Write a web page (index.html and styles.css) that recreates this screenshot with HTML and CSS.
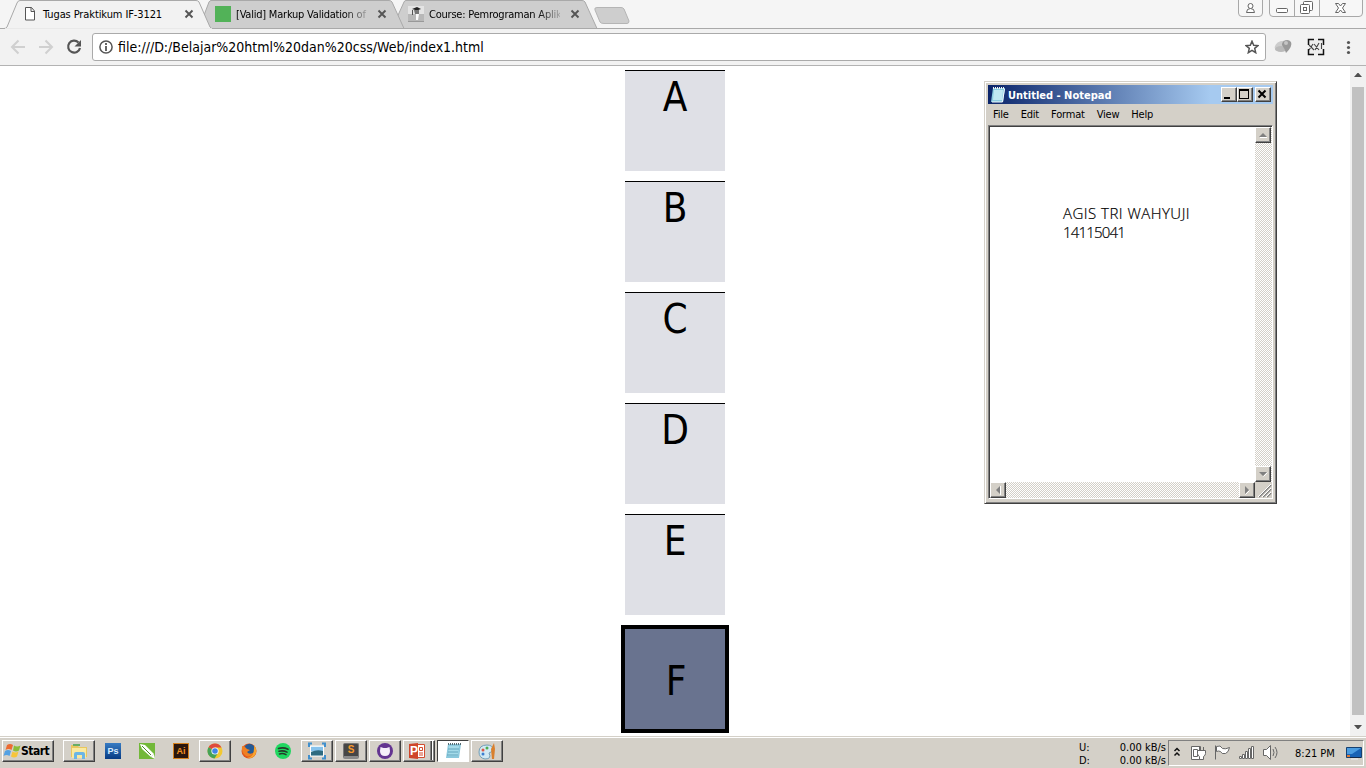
FILE: index.html
```html
<!DOCTYPE html>
<html lang="en">
<head>
<meta charset="utf-8">
<title>Tugas Praktikum IF-3121</title>
<link rel="stylesheet" href="styles.css">
</head>
<body>
<div class="desktop">
  <header class="browser">
    <div class="tabstrip">
      <svg class="tabshapes" width="640" height="29" viewBox="0 0 640 29">
        <path d="M392 28.500 L404 2 Q404.500 .5 406 .5 H582 Q584 .5 585 2 L597 28.500Z" fill="#cecece" stroke="#a9a9a9"/>
        <path d="M199 28.500 L209 2 Q210 .5 211 .5 H389 Q391 .5 392 2 L404 28.500Z" fill="#cecece" stroke="#a9a9a9"/>
        <path d="M597 7.500H621Q623 7.500 624 9L629 21Q629 23.500 627 23.500H604Q601 23.500 600 22L595 10Q594 7.500 597 7.500Z" fill="#cecece" stroke="#b5b5b5"/>
        <path d="M0 28.500H640" stroke="#a9a9a9"/>
        <path d="M0 29V28.500H4Q6 28.500 7 27L17 3Q18 .5 20 .5H196Q198 .5 199 2L210 27Q211 28.500 213 29Z" fill="#f2f2f2" stroke="#a9a9a9"/>
        <path d="M5 29H212" stroke="#f2f2f2" stroke-width="1.500"/>
      </svg>
      <div class="tab tab-one">
        <svg width="16" height="16" viewBox="0 0 16 16"><path d="M3.500 1.500h6l3 3.500v9h-9zM9 1.500V5.500h3.500" fill="#fff" stroke="#555"/></svg>
        <span class="tabtitle title-one">Tugas Praktikum IF-3121</span>
        <svg class="close" width="10" height="10" viewBox="0 0 10 10"><path d="M1.500 1.500l7 7M8.500 1.500l-7 7" stroke="#555" stroke-width="1.900"/></svg>
      </div>
      <div class="tab tab-two">
        <i class="green"></i>
        <span class="tabtitle fade title-two">[Valid] Markup Validation of</span>
        <svg class="close" width="10" height="10" viewBox="0 0 10 10"><path d="M1.500 1.500l7 7M8.500 1.500l-7 7" stroke="#555" stroke-width="1.900"/></svg>
      </div>
      <div class="tab tab-three">
        <svg width="16" height="16" viewBox="0 0 16 16"><path d="M0 0h16v16H0z" fill="#b8b8b8"/><path d="M0 0h16v8H0z" fill="#e4e4e4"/><path d="M4 3l5-2 4 2-4 1.500z" fill="#222"/><path d="M6 4h5v4H7z" fill="#777"/><path d="M8 8h3l-1 6H8z" fill="#fafafa"/><path d="M4.500 4v5" stroke="#555"/><path d="M0 15.500h16" stroke="#999"/></svg>
        <span class="tabtitle fade title-three">Course: Pemrograman Aplik</span>
        <svg class="close" width="10" height="10" viewBox="0 0 10 10"><path d="M1.500 1.500l7 7M8.500 1.500l-7 7" stroke="#555" stroke-width="1.900"/></svg>
      </div>
      <svg class="wincontrols" width="132" height="18" viewBox="0 0 132 18">
        <g fill="#f7f7f7" stroke="#a8a8a8"><path d="M4.500-1V13q0 3.500 3.500 3.500H25q3.500 0 3.500-3.500V-1"/><path d="M35.500-1V13q0 3.500 3.500 3.500h86q3.500 0 3.500-3.500V-1M60.500 0v16M85.500 0v16"/></g>
        <g fill="#fff" stroke="#666"><circle cx="16.500" cy="6" r="2.500"/><path d="M12.500 12.500q0-4 4-4t4 4z"/><rect x="42.500" y="8.500" width="11" height="4" rx="1"/><rect x="69.500" y="1.500" width="9" height="9" rx="1"/><rect x="66.500" y="4.500" width="9" height="9" rx="1"/><rect x="69.500" y="7.500" width="3" height="3"/><path d="M101.500 3.500h3l2 2.500 2-2.500h3l-3 4.500 3 4.500h-3l-2-2.500-2 2.500h-3l3-4.500z"/></g>
      </svg>
    </div>
    <div class="toolbar">
      <svg class="nav" width="92" height="36" viewBox="0 0 92 36"><g fill="none" stroke="#d0d0d0" stroke-width="2"><path d="M25 18H12M18.500 11.500L12 18l6.500 6.500M39 18h13M45.500 11.500L52 18l-6.500 6.500"/></g><path d="M78.500 13.500A6 6 0 1 0 80 19" fill="none" stroke="#555" stroke-width="2.200"/><path d="M81 11v6.500h-6.500z" fill="#555"/></svg>
      <div class="address">
        <svg width="14" height="14" viewBox="0 0 14 14"><circle cx="7" cy="7" r="6.100" fill="none" stroke="#555" stroke-width="1.500"/><path d="M7 6v5M7 3v2" stroke="#555" stroke-width="1.800"/></svg>
        <span class="url">file:///D:/Belajar%20html%20dan%20css/Web/index1.html</span>
        <svg class="star" width="14" height="14" viewBox="0 0 14 14"><path d="M7 1.200l1.700 4 4.300.4-3.300 2.800 1 4.300L7 10.400l-3.700 2.300 1-4.300L1 5.600l4.300-.4z" fill="none" stroke="#555" stroke-width="1.500"/></svg>
      </div>
      <svg class="extensions" width="100" height="36" viewBox="0 0 100 36">
        <ellipse cx="16" cy="17" rx="7.500" ry="5" fill="#ccc" transform="rotate(-20 16 17)"/><ellipse cx="15" cy="20" rx="6" ry="3" fill="#bababa"/><path d="M16 16a5 5 0 0 1 9-3q2 4-5 11-1-4-4-8z" fill="#999"/><circle cx="20" cy="14" r="2" fill="#c5c5c5"/>
        <path d="M42 10h16v16H42z" fill="#eee"/><path d="M48 10.500h-5.500V16M52 10.500h5.500V16M42.500 20v5.500H48M57.500 20v5.500H52" fill="none" stroke="#111" stroke-width="1.500"/><path d="M43 16l5 5M47 15l-4 6M48 15l5 6M53 14l-4 7M55.500 14v6" stroke="#444" stroke-width="1.100"/>
        <g fill="#555"><circle cx="82.500" cy="13.500" r="1.600"/><circle cx="82.500" cy="18.500" r="1.600"/><circle cx="82.500" cy="23.500" r="1.600"/></g>
      </svg>
    </div>
  </header>
  <main class="viewport">
    <div class="page">
      <div class="box">A</div>
      <div class="box">B</div>
      <div class="box">C</div>
      <div class="box">D</div>
      <div class="box">E</div>
      <div class="box active">F</div>
    </div>
    <div class="pagescroll">
      <svg width="16" height="21" viewBox="0 0 16 21"><path d="M4 11l3.500-4h1L12 11z" fill="#505050"/></svg>
      <i class="thumb"></i>
      <svg width="16" height="21" viewBox="0 0 16 21"><path d="M4 10l3.500 4h1L12 10z" fill="#505050"/></svg>
    </div>
  </main>
  <footer class="taskbar">
    <div class="start"><svg width="18" height="18" viewBox="0 0 18 18"><path d="M4 3q3-2 6 0L8.500 8Q5.500 6 2.500 8z" fill="#ed6b32"/><path d="M11 3.500q3 2 6.500 0L16 8.500q-3 2-6 0z" fill="#8abd38"/><path d="M2 9q3-2 6 0l-1.500 5q-3-2-6 0z" fill="#54a1e2"/><path d="M9.500 9.500q3 2 6 0L14 14.500q-3 2-6 0z" fill="#f7c53a"/></svg><span>Start</span></div>
    <div class="apps">
      <div class="app raised"><svg viewBox="0 0 20 20"><path d="M2 4h6l2 2h8v10H2z" fill="#e9c75e"/><path d="M3 7h14v10H3z" fill="#fae9a0"/><path d="M4 3h7v2H4z" fill="#68ad65"/><path d="M5 18v-5q0-2 2-2h7q2 0 2 2v5h-3v-4H8v4z" fill="#6bb5e6"/></svg></div>
      <div class="app ps"><span>Ps</span></div>
      <div class="app"><svg viewBox="0 0 20 20"><path d="M2 2h16v16H2z" fill="#72b839"/><path d="M3 3l5 1 9 9-3 3-9-8z" fill="#fff"/><path d="M14 16l4 2-1-5z" fill="#fff"/><path d="M5 5l9 9" stroke="#4d8d25"/></svg></div>
      <div class="app ai"><span>Ai</span></div>
      <div class="app raised"><svg viewBox="0 0 20 20"><circle cx="10" cy="10" r="7.500" fill="#f2c831"/><path d="M10 10L3.500 6.200A7.500 7.500 0 0 1 16.500 6.500H10z" fill="#de4b3e"/><path d="M10 10L3.500 6.200A7.500 7.500 0 0 0 9.500 17.500L13 12z" fill="#45a257"/><circle cx="10" cy="10" r="3.600" fill="#fff"/><circle cx="10" cy="10" r="2.800" fill="#4285e5"/></svg></div>
      <div class="app"><svg viewBox="0 0 20 20"><circle cx="10" cy="10" r="7.500" fill="#e0561b"/><circle cx="10.500" cy="8" r="5.300" fill="#265a94"/><path d="M3 5q3 0 5 3l3 1-3 2q2 3 6 1-2 5-7 3-5-3-4-10z" fill="#ef7f22"/><path d="M15 4q4 5 1 10-3 4-8 3 8-1 7-13z" fill="#f6a52f"/></svg></div>
      <div class="app"><svg viewBox="0 0 20 20"><circle cx="10" cy="10" r="8" fill="#20d760"/><g fill="none" stroke="#253b2b" stroke-width="1.600" stroke-linecap="round"><path d="M5.500 7.500q5-1.500 9.500.8M6 10.300q4-1.200 8 .8M6.500 12.900q3.500-1 6.500.7"/></g></svg></div>
      <div class="app raised"><svg viewBox="0 0 20 20"><path d="M3.500 5h13v10h-13z" fill="#cde9f6" stroke="#fff"/><path d="M4 6h12v4H4z" fill="#86c2ec"/><path d="M4 11q6-3 12-1v4.500H4z" fill="#2f6b80"/><path d="M2 6V2.500h3M15 2.500h3V6M2 14v3.500h3M15 17.500h3V14" fill="none" stroke="#4190cd" stroke-width="2"/></svg></div>
      <div class="app raised sublime"><span>S</span></div>
      <div class="app raised"><svg viewBox="0 0 20 20"><circle cx="10" cy="10" r="8" fill="#633491"/><path d="M5.500 6l3 1h3l3-1 .5 4q0 5-5 5t-5-5z" fill="#f5effa"/></svg></div>
      <div class="app raised ppt"><svg viewBox="0 0 20 20"><path d="M9 3.500h8.500v13H9z" fill="#fff" stroke="#d44c2f"/><path d="M12.500 6.500h3v3h-3zM12 12h4M12 14h4" fill="#fff" stroke="#d44c2f"/><path d="M2 3l9-1v16l-9-1z" fill="#cf4529"/></svg><span>P</span></div>
      <div class="app pressed"><svg viewBox="0 0 20 20"><path d="M5 3h13l-2 14H3z" fill="#8ac8dc"/><path d="M6 5h10l-1 10H5z" fill="#a5dbe9"/><path d="M5 3h13" stroke="#566b73" stroke-width="2" stroke-dasharray="1 1"/><path d="M5 8h11M5 11h10M4 14h11" stroke="#63a5bd"/></svg></div>
      <div class="app raised"><svg viewBox="0 0 20 20"><path d="M2 11q0-7 8-7 6 0 6 5-1 2-4 3 3 6-4 6-6-1-6-7z" fill="#d1e9f3" stroke="#729fb8"/><circle cx="6" cy="9" r="1.500" fill="#dc5845"/><circle cx="10" cy="7" r="1.500" fill="#4fad50"/><circle cx="6" cy="13" r="1.500" fill="#3b7fd0"/><path d="M15 18L14 8l3-6 1 6-1 10z" fill="#d9802e"/></svg></div>
    </div>
    <div class="rates"><div><span>U:</span><span>0.00 kB/s</span></div><div><span>D:</span><span>0.00 kB/s</span></div></div>
    <div class="tray">
      <svg width="122" height="22" viewBox="0 0 122 22">
        <path d="M5.500 9L8 6.500 10.500 9M5.500 13.500L8 11l2.500 2.500" fill="none" stroke="#111" stroke-width="1.500"/>
        <g fill="#fff" stroke="#666"><path d="M22.500 4.500h9v13h-9z"/><path d="M24.500 7.500h4v7h-4z"/><path d="M28.500 8.500h8v3q0 2-2 3v3h-4v-3q-2-1-2-3zM30.500 8V5M34.500 8V5"/><path d="M46.500 3.500v14M47.500 4.500q4-2 6 2 3 1 7-1-1 5-4 6-4 1-5-2-2-1-4 0z"/><path d="M70.500 14.500h2v2h-2zM73.500 12.500h2v4h-2zM76.500 9.500h2v7h-2zM79.500 6.500h2v10h-2zM82.500 4.500h2v12h-2z"/><path d="M94.500 7.500h3l4-4v14l-4-4h-3z"/><path d="M104 7q2 3.500 0 7M106 5q4 5.500 0 11" fill="none"/></g>
      </svg>
      <span class="clock">8:21 PM</span>
      <svg width="16" height="16" viewBox="0 0 16 16"><path d="M.5 2.500h15v10H.5z" fill="#1762b5" stroke="#174171"/><path d="M1 3h14L6 9H1z" fill="#4b9ce0"/><path d="M1 10h3v2H1z" fill="#db7937"/><path d="M4 12h11v1H4z" fill="#152a49"/><path d="M5 14h7" stroke="#eee"/></svg>
    </div>
  </footer>

  <section class="notepad">
    <div class="titlebar">
      <svg width="16" height="17" viewBox="0 0 16 17"><path d="M3 2h12l-2 14H1z" fill="#8ccce0"/><path d="M4 4h9l-1 10H3z" fill="#c0e8f2"/><path d="M3 2h12" stroke="#f5f5f5" stroke-width="2" stroke-dasharray="1 1"/><path d="M14.500 3l-2 13H2" fill="none" stroke="#f4fbff"/></svg>
      <span class="caption">Untitled - Notepad</span>
      <span class="winbtn"><svg viewBox="0 0 12 12"><path d="M2 9h6v2H2z"/></svg></span><span class="winbtn"><svg viewBox="0 0 12 12"><path d="M1 1h10v10H1zM2 3v7h8V3z" fill-rule="evenodd"/></svg></span><span class="winbtn closebtn"><svg viewBox="0 0 12 12"><path d="M2.500 2.500l7 7M9.500 2.500l-7 7" stroke="#000" stroke-width="2"/></svg></span>
    </div>
    <nav class="menu"><span>File</span><span>Edit</span><span>Format</span><span>View</span><span>Help</span></nav>
    <div class="editor">
      <div class="note"><span class="name">AGIS TRI WAHYUJI</span><br><span class="number">14115041</span></div>
      <div class="vscroll"><span class="sbtn"><svg viewBox="0 0 12 12"><path d="M3 8.500h7" stroke="#fff"/><path d="M2 8l4-4 4 4z" fill="#808080"/></svg></span><span class="sbtn"><svg viewBox="0 0 12 12"><path d="M10.500 4.500L6.500 8.500" stroke="#fff"/><path d="M2 4l4 4 4-4z" fill="#808080"/></svg></span></div>
      <div class="hscroll"><span class="sbtn"><svg viewBox="0 0 12 12"><path d="M8.500 2v9" stroke="#fff"/><path d="M8 2L4 6l4 4z" fill="#808080"/></svg></span><span class="sbtn"><svg viewBox="0 0 12 12"><path d="M4.500 10.500l4-4" stroke="#fff"/><path d="M4 2l4 4-4 4z" fill="#808080"/></svg></span></div>
      <svg class="grip" width="17" height="16" viewBox="0 0 17 16"><path d="M4 15L16 3M8 15l8-8M12 15l4-4" stroke="#808080" stroke-width="1.600"/><path d="M3 15L16 2M7 15l9-9M11 15l5-5" stroke="#fff"/></svg>
    </div>
  </section>
</div>
</body>
</html>
```
FILE: styles.css
```css
*{box-sizing:border-box}
body{margin:0;background:#fff;color:#000;font:11px "DejaVu Sans Condensed","DejaVu Sans",sans-serif;font-stretch:condensed}
svg{display:block;flex:none}
.desktop{position:relative;width:1366px;height:768px;overflow:hidden;display:flex;flex-direction:column}
.browser{height:66px;background:#f2f2f2;border-bottom:1px solid #b3b3b3}
.tabstrip{height:29px;position:relative;display:flex;align-items:center;background:#f5f5f5;border-bottom:1px solid #a9a9a9}
.tabshapes{position:absolute;left:0;top:0}
.tab{position:relative;display:flex;align-items:center;height:28px;flex:none}
.tab-one{width:193px;margin-left:22px}
.tab-two{width:193px}
.tab-three{width:200px}
.tabtitle{width:131px;margin-left:5px;white-space:nowrap;line-height:16px;padding-top:1px}
.title-one{letter-spacing:-.1px}
.title-two{letter-spacing:-.22px}
.title-three{letter-spacing:-.22px}
.close{margin-left:10px}
.green{width:16px;height:16px;background:#52b258}
.fade{-webkit-mask-image:linear-gradient(90deg,#000 108px,#0003 131px);mask-image:linear-gradient(90deg,#000 108px,#0003 131px)}
.wincontrols{margin-left:auto;align-self:flex-start}
.toolbar{display:flex;height:36px;align-items:center}
.address{width:1174px;height:28px;border:1px solid #aaa;border-radius:3px;background:#fff;display:flex;align-items:center;padding:0 6px}
.url{font-size:14px;margin-left:5px;white-space:nowrap}
.star{margin-left:auto}
.viewport{height:670px;display:flex;position:relative}
.page{width:1350px;display:flex;flex-direction:column;align-items:center;gap:10px;padding-top:4px}
.box{width:100px;height:101px;flex:none;background:#dfe0e6;border-top:1px solid #000;text-align:center;font-size:40px;line-height:53px}
.box.active{width:108px;height:108px;background:#69738f;border:4px solid #000;line-height:105px;padding-left:2px}
.pagescroll{width:16px;background:#f1f1f1;display:flex;flex-direction:column;justify-content:space-between}
.thumb{height:628px;width:12px;margin-left:2px;background:#c1c1c1}
.taskbar{height:32px;background:#d4d0c8;box-shadow:inset 0 1px #d4d0c8,inset 0 2px #fff;display:flex;align-items:flex-start;padding:4px 2px 2px}
.start{width:52px;height:22px;border:1px solid;border-color:#fff #404040 #404040 #fff;box-shadow:inset -1px -1px #808080;display:flex;align-items:center;font-weight:bold;font-size:12px;letter-spacing:-.5px}
.apps{display:flex;gap:2px;margin-left:9px}
.app{width:32px;height:22px;display:flex;align-items:center;justify-content:center;position:relative}
.app svg{width:20px;height:20px}
.raised{border:1px solid;border-color:#fff #404040 #404040 #fff;box-shadow:inset -1px -1px #808080}
.pressed{border:1px solid;border-color:#404040 #fff #fff #404040;background:#fff}
.ps span,.ai span,.sublime span{width:16px;height:16px;display:block;font:bold 9px/16px "Liberation Sans",sans-serif;text-align:center}
.ps span{background:linear-gradient(#377bc3,#073b83);color:#d6ebff}
.ai span{background:#2b160c;color:#f39320;border:1px solid #d5811d;line-height:14px}
.sublime span{background:#464646;color:#f7992c;border:1px solid #777;border-bottom:3px solid #8a8a8a;border-radius:2px;line-height:12px;font-size:10px}
.ppt{border-right:1px solid #404040;box-shadow:inset -1px -1px #808080,inset -2px 0 #fff,inset -3px 0 #404040,inset -4px 0 #808080}
.ppt svg{margin-right:4px}
.ppt span{position:absolute;left:6px;top:3px;font:bold 12px/14px "Liberation Sans",sans-serif;color:#fff}
.rates{margin-left:auto;width:88px;font-size:11px;line-height:13px;padding:1px 1px 0 0;letter-spacing:0}
.rates div{display:flex;justify-content:space-between}
.tray{margin-left:1px;height:26px;width:196px;border:1px solid;border-color:#808080 #fff #fff #808080;display:flex;align-items:center;padding-right:1px}
.clock{white-space:nowrap;margin:0 auto 0 4px}
.notepad{position:absolute;left:984px;top:81px;width:293px;height:423px;background:#d4d0c8;border:1px solid;border-color:#d4d0c8 #404040 #404040 #d4d0c8;box-shadow:inset 1px 1px #fff,inset -1px -1px #808080;padding:3px}
.titlebar{height:19px;background:linear-gradient(90deg,#0a246a,#a6caf0 78%);display:flex;align-items:center;padding:0 2px;color:#fff}
.caption{font-weight:bold;margin:0 auto 0 2px;padding-top:1px;letter-spacing:0;white-space:nowrap}
.winbtn{width:16px;height:15px;background:#d4d0c8;border:1px solid;border-color:#fff #404040 #404040 #fff;box-shadow:inset -1px -1px #808080}
.winbtn svg{width:12px;height:12px}
.closebtn{margin-left:2px}
.menu{height:21px;display:flex;padding-left:5px;gap:12px;line-height:21px}
.menu span{letter-spacing:-.2px}
.editor{height:374px;border:1px solid;border-color:#808080 #fff #fff #808080;box-shadow:inset 1px 1px #404040;background:#fff;display:grid;grid-template:1fr 16px/1fr 17px;padding:1px 0 0 1px}
.note{font:15px/19px "Open Sans","Noto Sans",sans-serif;font-weight:300;padding:77px 0 0 73px;white-space:nowrap}
.name{letter-spacing:.47px}
.number{letter-spacing:-.8px}
.name,.number{-webkit-text-stroke:.2px #000}
.vscroll,.hscroll{display:flex;justify-content:space-between;background:repeating-conic-gradient(#d4d0c8 0 25%,#fff 0 50%) 0 0/2px 2px}
.vscroll{flex-direction:column}
.sbtn{width:16px;height:16px;background:#d4d0c8;border:1px solid;border-color:#fff #404040 #404040 #fff;box-shadow:inset -1px -1px #808080}
.sbtn svg{width:12px;height:12px;margin:1px}
.grip{background:#d4d0c8}
```
